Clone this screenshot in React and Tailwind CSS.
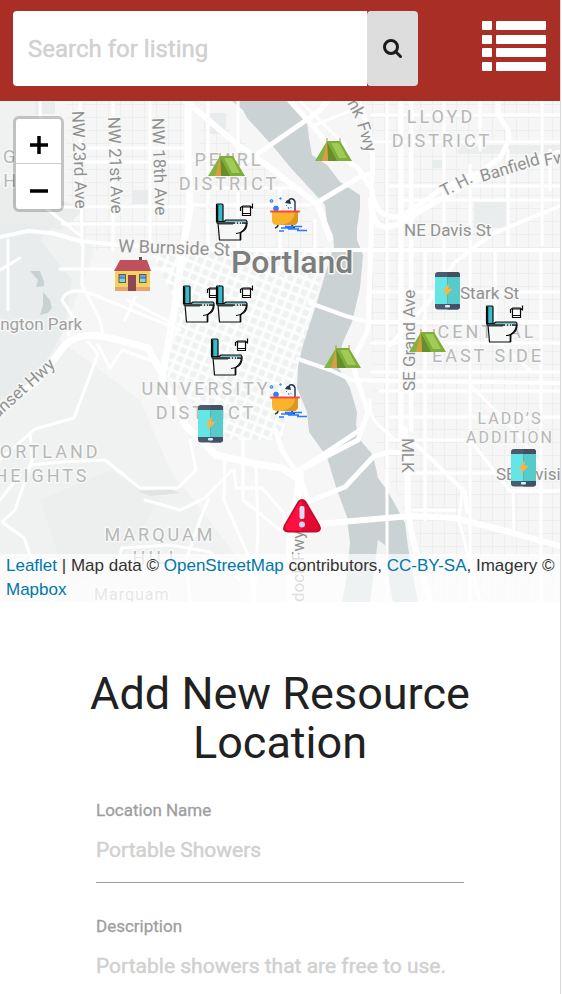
import React from "react";

const RIVER =
  "M232 101L243 110L247 118L260 132L277 151L290 167L313 192L325 205L327 222L333 235L334 247L330 258L317 302L303 345L298 366L297 388L307 412L309 432L327 457L337 490L347 517L350 543L347 575L342 602H418L408 547L405 523L397 508L387 490L378 478L373 455L360 440L356 425L357 412L350 388L337 365L343 342L352 322L360 288L363 255L357 240L357 228L360 208L360 195L340 182L327 165L312 155L309 138L307 122L288 101Z";

const MAJOR_ROADS = [
  ["M186 101L240 147L268 166L318 205L330 238", 6],
  ["M290 101L318 132L330 148L358 168L372 190L371 240L368 330L352 362L358 382L368 412L358 440L300 470", 5],
  ["M358 101C372 130 375 160 371 185C374 210 380 218 402 217L440 190L480 172L500 158L509 140L508 130L498 114L498 101", 5],
  ["M371 200C372 235 390 230 408 218L470 182L520 163L562 152", 6],
  ["M401 101V440", 5],
  ["M411 101V430", 5],
  ["M0 237L28 231L52 233L80 241L120 245L240 250L562 250", 4],
  ["M240 166L318 112L328 101", 5],
  ["M318 202L358 178L372 173", 5],
  ["M310 303L346 316L368 322L562 322", 4],
  ["M298 359L330 370L352 380L401 381L562 383", 4],
  ["M296 472L318 458L360 430", 5],
  ["M300 505L345 487L374 456L390 452L408 453", 5],
  ["M318 524L410 516L455 518L502 530L560 546", 6],
  ["M405 430C411 470 403 500 413 540L430 602", 6],
  ["M188 101V160L190 210L182 252L176 300L162 378L186 426L216 455L256 464L282 468L300 480", 7],
  ["M0 410L38 380L65 345C78 332 98 334 122 341L148 348L160 370", 7],
  ["M300 475L297 500L290 525L291 602", 8],
  ["M275 430L282 450L300 478L308 500", 5],
  ["M562 205L492 234L455 262L430 300L390 345", 4],
  ["M411 440L430 458L465 492L467 512", 4],
];

const MINOR_ROADS = [
  "M40 101L42 205L80 235", "M113 101V250", "M150 101V250", "M74 148H186", "M74 162H186",
  "M58 207H186", "M62 224H186", "M80 101L82 245", "M83 245L82 285L100 320L103 336",
  "M60 269H170", "M8 240L8 310", "M0 270L20 258", "M62 300C66 288 82 290 92 294L180 330",
  "M62 300L75 320L68 335", "M135 297L125 320", "M128 300L170 322", "M88 342L98 354L74 418L35 429L0 460",
  "M98 345L110 368L122 350L155 362", "M30 433L32 460L15 510L2 522L24 538L32 560",
  "M30 465L62 462L105 460L140 488L178 488L196 470L190 440", "M145 500L180 510L205 498L232 470",
  "M225 455L224 500L250 560L254 602", "M256 466L258 530L254 602", "M234 470L236 488L262 488L283 512L287 530",
  "M243 440L243 500L280 530", "M208 500L200 520L186 560L190 602", "M118 560L122 548L170 545L210 552L240 580",
  "M0 500L20 475", "M50 560L52 602", "M387 101V602", "M444 101V280", "M470 165V602", "M480 101V150",
  "M508 150V245", "M542 101V245", "M541 250V602", "M425 250V520", "M495 250V340L530 370",
  "M372 292H562", "M372 343H562", "M372 372H562", "M380 391H562", "M390 417H562", "M390 186H562",
  "M371 142H562", "M400 200H562", "M390 440H470L510 491H562", "M404 473H500", "M413 510H455",
  "M372 115H562", "M462 491L459 520L480 602", "M513 491L514 532", "M370 400C368 425 385 428 395 440",
  "M470 385L515 430L545 472", "M550 150V190", "M300 101L345 145L350 165", "M315 125L352 110",
  "M191 160H260", "M191 205H310", "M191 188H300", "M208 101V250", "M238 101V250", "M280 190V260", "M315 220V260",
];

function Terrain() {
  return (
    <g>
      <path d="M0 101H40L42 190L95 250L60 340L140 400L170 470L240 560V602H0Z" fill="#f0f2f1" />
      <path d="M0 200L60 218L40 240L72 280L64 330L35 380L0 400Z" fill="#e9ecec" />
      <path d="M0 180C30 205 60 190 82 212L60 230L20 222L0 226Z" fill="#eaedec" />
      <path d="M40 500L110 470L160 500L120 560L70 590Z" fill="#edefee" />
      <path d="M30 271L40 271L44 282L44 286L36 287L38 280Z" fill="#c9d2d3" />
      <path d="M43 292L50 300L52 308L48 313L40 315L43 305Z" fill="#c9d2d3" />
      <path d="M138 491L170 489L180 493L150 496Z" fill="#dfe3e2" />
      <path d="M474 202H508V228H474Z" fill="#eaeded" />
      <path d="M432 160H442V168H432Z M210 113H226V134H210Z M132 190H148V204H132Z M35 101H55V114H35Z" fill="#e8ecec" />
      <path d="M458 145H560V154H458Z" fill="#eceeed" />
    </g>
  );
}

function MapLabels() {
  return (
    <g fontFamily="Roboto, 'Open Sans', sans-serif" stroke="#f7f8f7" strokeWidth="3" paintOrder="stroke" strokeLinejoin="round">
      <g fill="#b8b8b8" fontSize="18" letterSpacing="3" textAnchor="middle">
        <text x="229" y="166">PEARL</text>
        <text x="229" y="190">DISTRICT</text>
        <text x="441" y="123">LLOYD</text>
        <text x="442" y="147">DISTRICT</text>
        <text x="487" y="338">CENTRAL</text>
        <text x="488" y="362">EAST SIDE</text>
        <text x="206" y="395">UNIVERSITY</text>
        <text x="206" y="419">DISTRICT</text>
        <text x="160" y="541">MARQUAM</text>
        <text x="157" y="564">HILL</text>
        <text x="43" y="458">PORTLAND</text>
        <text x="42" y="482">HEIGHTS</text>
      </g>
      <g fill="#b8b8b8" fontSize="16" letterSpacing="2" textAnchor="middle">
        <text x="510" y="424">LADD’S</text>
        <text x="510" y="443">ADDITION</text>
      </g>
      <g fill="#b8b8b8" fontSize="18" letterSpacing="3">
        <text x="3" y="163">G</text>
        <text x="-12" y="187">GH</text>
      </g>
      <g fill="#919191" fontSize="17">
        <text transform="translate(72 111) rotate(88)">NW 23rd Ave</text>
        <text transform="translate(108 117) rotate(88)">NW 21st Ave</text>
        <text transform="translate(152 118) rotate(88)">NW 18th Ave</text>
        <text transform="translate(118 252) rotate(2)" fontSize="18">W Burnside St</text>
        <text x="404" y="236">NE Davis St</text>
        <text x="460" y="299">Stark St</text>
        <text x="496" y="480">SE Division St</text>
        <text transform="translate(415 391) rotate(-90)">SE Grand Ave</text>
        <text transform="translate(402 438) rotate(90)">MLK</text>
        <text transform="translate(304 602) rotate(-90)">dock Fwy</text>
        <text transform="translate(-3 419) rotate(-42)">unset Hwy</text>
        <text transform="translate(444 197) rotate(-27)">T. H.</text>
        <text transform="translate(482 182) rotate(-17)">Banfield</text>
        <text transform="translate(545 166) rotate(-10)">Fwy</text>
        <text transform="translate(347 103) rotate(62)">nk</text>
        <text transform="translate(357 124) rotate(73)">Fwy</text>
      </g>
      <text x="-4" y="330" fill="#a0a0a0" fontSize="17">ington Park</text>
      <text x="94" y="600" fill="#acacac" fontSize="16" letterSpacing="1">Marquam</text>
      <text x="231" y="273" fill="#7d7d7d" fontSize="32" fontWeight="500">Portland</text>
    </g>
  );
}

function Tent() {
  return (
    <g>
      <path d="M12 0V5M25 0V5" stroke="#c98d42" strokeWidth="1" />
      <path d="M12 3L0 23H16Z" fill="#82b440" />
      <path d="M12 3L13 23H23Z" fill="#668f2c" />
      <path d="M12 3H25L37 23H22Z" fill="#7dae38" />
      <path d="M16 5H24L32 20H24Z" fill="#a2ca59" />
      <path d="M12 4L7 23H13Z" fill="#dc9c44" />
    </g>
  );
}

function Toilet() {
  return (
    <g stroke="#0b0b0b" strokeWidth="1.2" strokeLinejoin="round">
      <path d="M3 20H31.500C31 25 28 28 25.500 29.500V37H4.500Z" fill="#f6f7f7" />
      <path d="M1.500 1.500Q1.500 1 2.500 1H7Q8 1 8 2V18.500H1.500Z" fill="#35bdcb" />
      <path d="M2.500 2V19" strokeWidth="1.500" />
      <path d="M9 18.500L11 17H31L32 18.500V20H2V18.500Z" fill="#79bcc2" />
      <path d="M4 20.500H18" strokeWidth="2" stroke="#3a3a3a" />
      <path d="M20 20H27" strokeWidth="1.500" stroke="#fff" strokeDasharray="2 1" />
      <path d="M32 20C32 27 27 30.500 21 30.500" fill="none" />
      <path d="M25.500 29V37" strokeWidth="1.600" />
      <path d="M27.500 4H35.500V12.500H27.500Z" fill="#fff" />
      <path d="M25.500 8V4.500L28 3H35L37.500 5V0.500M27.500 10.500H35.500" fill="none" />
    </g>
  );
}

function Bath() {
  return (
    <g fill="none">
      <path d="M26 16V7Q25 3 21 4Q20 4.500 20 7" stroke="#21364b" strokeWidth="1.400" />
      <path d="M16 8Q18 3.500 21 5L22 9Z" fill="#21364b" />
      <path d="M17 10L18 11M19 12L20 14M22 12V13" stroke="#347cff" strokeWidth="1" />
      <g stroke="#2f7dff" fill="#91bbff">
        <circle cx="2.500" cy="6" r="1.400" />
        <circle cx="11.500" cy="3.500" r="0.800" />
        <circle cx="7" cy="13.500" r="2.400" fill="#2f7dff" />
      </g>
      <path d="M3 17H29V25Q29 30 24 30H8Q3 30 3 25Z" fill="#fab32f" />
      <path d="M26 17H29V25Q29 30 24 30H12Q25 28 26 17Z" fill="#dc951f" />
      <path d="M2 16.500H30" stroke="#ff4438" strokeWidth="2" strokeLinecap="round" />
      <path d="M9 30Q9 32 6 33M23 30Q23 32 26 33" stroke="#21364b" strokeWidth="1.500" />
      <path d="M12 33H24M16 31.500H33M19 34H30M28 35.500H38M10 36H15" stroke="#2878ff" strokeWidth="1.300" />
    </g>
  );
}

function House() {
  return (
    <g>
      <path d="M25 0H28V4H25Z" fill="#5f5360" />
      <path d="M1 13H36V34H1Z" fill="#f3d260" />
      <path d="M1 30H36V34H1Z" fill="#e9a56c" />
      <path d="M6 3H33L37 14H0Z" fill="#bf515e" />
      <path d="M14 18H22V34H14Z" fill="#8d4654" />
      <path d="M4.500 17H12V26H4.500ZM25 17H32.500V26H25Z" fill="#775260" />
      <path d="M5.500 18H11V20.500H5.500ZM26 18H31.500V20.500H26Z" fill="#5ea8dc" />
      <path d="M5.500 21.500H11V25H5.500ZM26 21.500H31.500V25H26Z" fill="#6cdce5" />
    </g>
  );
}

function Phone() {
  return (
    <g>
      <rect width="25" height="37.500" rx="3" fill="#4b5b6e" />
      <path d="M12.500 0H22Q25 0 25 3V34.500Q25 37.500 22 37.500H12.500Z" fill="#435063" />
      <path d="M0 5H12.500V32H0Z" fill="#63e6e5" />
      <path d="M12.500 5H25V32H12.500Z" fill="#57cbc9" />
      <rect x="10" y="33" width="5" height="2.500" rx="1" fill="#dcebff" />
      <path d="M13.500 12L8 19.500H11.500L10 25L17 17H13Z" fill="#ffb344" stroke="#ffb344" strokeWidth="0.500" />
    </g>
  );
}

function Alert() {
  return (
    <g>
      <path d="M15 2Q19 -2 23 2L37 26Q40 33 33 33.500H5Q-2 33 1 26Z" fill="#c60b2e" />
      <path d="M16 4Q19 0 22 4L35 26Q37 31 33 31.500H5Q1 31 3 26Z" fill="#e20a31" />
      <path d="M16 4Q17 2 19 2V31.500H5Q1 31 3 26Z" fill="#ff1041" />
      <rect x="16.500" y="7" width="5" height="13" rx="2" fill="#d9dafd" />
      <circle cx="19" cy="25.500" r="3" fill="#d0d4fb" />
    </g>
  );
}

const MARKERS = [
  { Icon: Tent, name: "Shelter", x: 208, y: 153 },
  { Icon: Tent, name: "Shelter", x: 315, y: 138 },
  { Icon: Tent, name: "Shelter", x: 324, y: 345 },
  { Icon: Tent, name: "Shelter", x: 409, y: 329 },
  { Icon: Toilet, name: "Restroom", x: 215, y: 203 },
  { Icon: Toilet, name: "Restroom", x: 182, y: 285 },
  { Icon: Toilet, name: "Restroom", x: 215, y: 285 },
  { Icon: Toilet, name: "Restroom", x: 210, y: 338 },
  { Icon: Toilet, name: "Restroom", x: 485, y: 305 },
  { Icon: Bath, name: "Shower", x: 269, y: 195 },
  { Icon: Bath, name: "Shower", x: 269, y: 381 },
  { Icon: House, name: "Housing", x: 114, y: 257 },
  { Icon: Phone, name: "Phone charging", x: 435, y: 272 },
  { Icon: Phone, name: "Phone charging", x: 198, y: 405 },
  { Icon: Phone, name: "Phone charging", x: 511, y: 449 },
  { Icon: Alert, name: "Alert", x: 283, y: 499 },
];

function CityMap() {
  return (
    <svg viewBox="0 101 560 501" preserveAspectRatio="xMidYMid slice" className="block h-full w-full" role="img" aria-label="Map of Portland">
      <defs>
        <pattern id="blocks" width="12" height="13" patternUnits="userSpaceOnUse">
          <path d="M0 0H12M0 0V13" stroke="#e9edec" strokeWidth="1.500" />
        </pattern>
        <pattern id="downtown" width="9" height="9" patternUnits="userSpaceOnUse" patternTransform="rotate(22)">
          <path d="M0 0H9V9H0Z" fill="#fcfdfd" />
          <rect x="1.500" y="1.500" width="6" height="6" rx="1" fill="#eff1f0" />
        </pattern>
      </defs>
      <path d="M0 101H560V602H0Z" fill="#f5f6f5" />
      <Terrain />
      <path d="M366 101H560V602H425L400 500L375 450Z" fill="url(#blocks)" />
      <path d="M66 101H190V250H90L66 220Z" fill="url(#blocks)" />
      <path d="M200 101L300 195L325 250H200Z" fill="url(#blocks)" />
      <path d="M150 250H328L290 400L282 440L230 440L165 375L180 310Z" fill="url(#downtown)" />
      <path d={RIVER} fill="#cad2d4" />
      <path d="M378 540L385 545L387 570L393 602H370Z" fill="#f1f3f2" />
      <g fill="none" stroke="#fff" strokeLinejoin="round" strokeLinecap="round">
        {MINOR_ROADS.map((d) => (
          <path key={d} d={d} strokeWidth="3" />
        ))}
        {MAJOR_ROADS.map(([d, w]) => (
          <path key={d} d={d} strokeWidth={w} />
        ))}
      </g>
      <MapLabels />
      {MARKERS.map(({ Icon, name, x, y }) => (
        <g key={`${x}-${y}`} transform={`translate(${x} ${y})`} role="img" aria-label={name}>
          <Icon />
        </g>
      ))}
    </svg>
  );
}

function Header() {
  return (
    <header className="flex h-[101px] items-start justify-between bg-[#a92f26] pt-[11px] pr-[14px] pl-[13px]">
      <form className="flex h-[75px]" role="search" onSubmit={(e) => e.preventDefault()}>
        <input
          type="search"
          aria-label="Search for listing"
          placeholder="Search for listing"
          className="w-[354px] rounded-l bg-white px-[15px] text-2xl text-[#212121] outline-none placeholder:text-[#d1d1d1] placeholder:[-webkit-text-stroke:0.5px_#d1d1d1]"
        />
        <button type="submit" aria-label="Search" className="flex w-[51px] items-center justify-center rounded bg-[#ddd]">
          <svg viewBox="0 0 20 20" className="h-5 w-5" fill="none" stroke="#1c1c1c" strokeWidth="3">
            <circle cx="8" cy="8" r="6.500" />
            <path d="M12.500 12.500L17.500 17.500" strokeLinecap="round" />
          </svg>
        </button>
      </form>
      <button type="button" aria-label="Show listings" className="mt-[10px]">
        <svg viewBox="0 0 64 50" className="h-[50px] w-16" fill="#fff">
          {[0, 14, 27, 41].map((y) => (
            <g key={y}>
              <rect y={y} width="10" height="9" rx="1" />
              <rect x="14" y={y} width="50" height="9" rx="1" />
            </g>
          ))}
        </svg>
      </button>
    </header>
  );
}

function ZoomControl() {
  return (
    <div className="absolute top-[15px] left-[13px] flex w-[51px] flex-col rounded-md border-[3px] border-black/20 bg-clip-padding">
      <button type="button" aria-label="Zoom in" className="flex h-[45px] items-center justify-center rounded-t-sm border-b border-[#ccc] bg-white pt-2">
        <svg viewBox="0 0 18 18" className="h-[18px] w-[18px]" stroke="#000" strokeWidth="3.500">
          <path d="M0 9H18M9 0V18" />
        </svg>
      </button>
      <button type="button" aria-label="Zoom out" className="flex h-[45px] items-center justify-center rounded-b-sm bg-white pt-2">
        <svg viewBox="0 0 18 18" className="h-[18px] w-[18px]" stroke="#000" strokeWidth="3.500">
          <path d="M0 9H18" />
        </svg>
      </button>
    </div>
  );
}

function Field({ id, label, placeholder }) {
  return (
    <div className="flex flex-col">
      <label htmlFor={id} className="text-[17px] leading-6 text-[#9e9e9e] [-webkit-text-stroke:0.3px_#9e9e9e]">
        {label}
      </label>
      <input
        id={id}
        type="text"
        placeholder={placeholder}
        className="h-[61px] border-b border-[#9e9e9e] bg-transparent pb-1 text-[21px] text-[#212121] outline-none placeholder:text-[#d1d1d1] placeholder:[-webkit-text-stroke:0.5px_#d1d1d1]"
      />
    </div>
  );
}

export default function App() {
  const link = "text-[#0078a8]";
  return (
    <div className="h-screen overflow-y-auto bg-white pr-px font-[Roboto,sans-serif] [scrollbar-width:none]">
      <div className="border-r border-[#d9d9dd]">
        <Header />
        <section className="relative h-[501px] overflow-hidden">
          <CityMap />
          <ZoomControl />
          <p className="absolute inset-x-0 bottom-0 bg-white/70 pl-[6px] font-['Liberation_Sans',Arial,sans-serif] text-[17px] leading-6 text-[#333]">
            <a href="#leaflet" className={link}>Leaflet</a> | Map data ©{" "}
            <a href="#openstreetmap" className={link}>OpenStreetMap</a> contributors,{" "}
            <a href="#license" className={link}>CC-BY-SA</a>, Imagery ©{" "}
            <a href="#mapbox" className={link}>Mapbox</a>
          </p>
        </section>
        <main className="px-24 pt-[67px]">
          <h1 className="-mx-4 text-center text-[45px] leading-[49px] text-[#212121]">Add New Resource Location</h1>
          <form className="mt-[31px] flex flex-col gap-[31px]" onSubmit={(e) => e.preventDefault()}>
            <Field id="location-name" label="Location Name" placeholder="Portable Showers" />
            <Field id="description" label="Description" placeholder="Portable showers that are free to use." />
          </form>
        </main>
      </div>
    </div>
  );
}
